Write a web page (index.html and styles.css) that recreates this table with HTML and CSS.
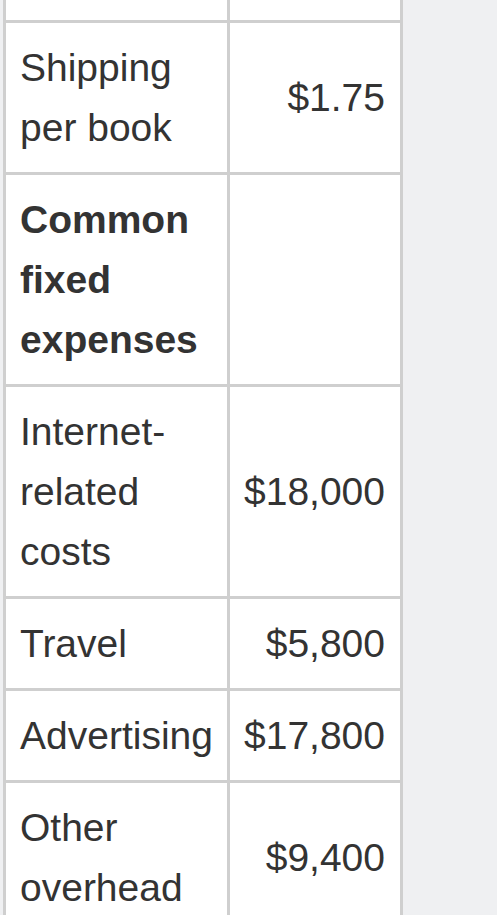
FILE: index.html
```html
<!DOCTYPE html>
<html lang="en">
<head>
<meta charset="utf-8">
<title>Cost table</title>
<link rel="stylesheet" href="styles.css">
</head>
<body>
<table class="costs">
  <tbody>
    <tr class="cut-row">
      <td class="label"></td>
      <td class="value"></td>
    </tr>
    <tr>
      <td class="label">Shipping per book</td>
      <td class="value">$1.75</td>
    </tr>
    <tr>
      <td class="label heading">Common fixed expenses</td>
      <td class="value"></td>
    </tr>
    <tr>
      <td class="label">Internet-related costs</td>
      <td class="value">$18,000</td>
    </tr>
    <tr>
      <td class="label">Travel</td>
      <td class="value">$5,800</td>
    </tr>
    <tr>
      <td class="label">Advertising</td>
      <td class="value">$17,800</td>
    </tr>
    <tr>
      <td class="label">Other overhead</td>
      <td class="value">$9,400</td>
    </tr>
  </tbody>
</table>
</body>
</html>
```

FILE: styles.css
```css
html, body {
  margin: 0;
  padding: 0;
  background: #eff0f2;
}

body {
  font-family: "Liberation Sans", Arial, Helvetica, sans-serif;
  color: #333333;
  overflow: hidden;
}

.costs {
  margin-left: 3px;
  border-collapse: separate;
  border-spacing: 0;
  table-layout: fixed;
  width: 400px;
  background: #ffffff;
  border-left: 3px solid #cfcfcf;
  font-size: 39px;
  line-height: 60px;
}

.costs td {
  box-sizing: border-box;
  border-right: 3px solid #cfcfcf;
  border-bottom: 3px solid #cfcfcf;
  padding: 15px 14px 14px 14px;
}

.costs .label {
  width: 224px;
  vertical-align: top;
  text-align: left;
  padding-right: 12px;
}

.costs .value {
  width: 173px;
  vertical-align: middle;
  text-align: right;
  padding-right: 15px;
}

.costs .heading {
  font-weight: bold;
}

.costs .cut-row td {
  height: 23px;
  padding: 0;
}
```
